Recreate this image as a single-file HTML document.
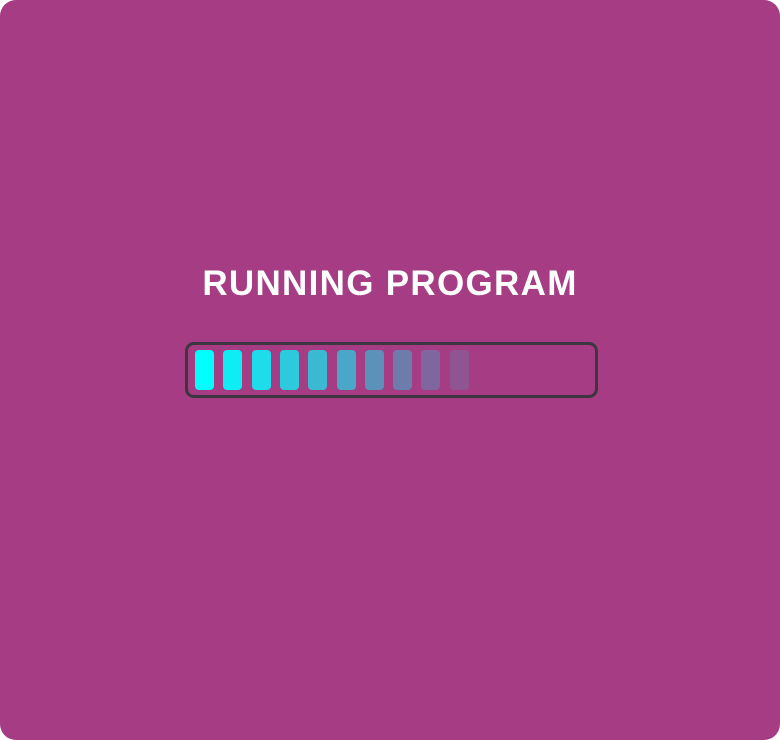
<!DOCTYPE html>
<html><head><style>
html,body{margin:0;padding:0;background:#fff;}
.card{position:absolute;left:0;top:0;width:780px;height:740px;background:#a53c84;border-radius:16px;}
.t{position:absolute;left:0;width:780px;top:262px;text-align:center;color:#fff;font:bold 35px "Liberation Sans",sans-serif;letter-spacing:1.3px;line-height:44px;}
.bar{position:absolute;left:185px;top:342px;width:407px;height:50px;border:3px solid #3d3540;border-radius:9px;}
.s{position:absolute;top:350px;width:19px;height:40px;border-radius:4px;background:#00ffff;}
</style></head><body>
<div class="card">
<div class="t">RUNNING PROGRAM</div>
<div class="bar"></div>
<div class="s" style="left:195px;opacity:1"></div>
<div class="s" style="left:223px;opacity:.91"></div>
<div class="s" style="left:252px;opacity:.82"></div>
<div class="s" style="left:280px;opacity:.73"></div>
<div class="s" style="left:308px;opacity:.64"></div>
<div class="s" style="left:337px;opacity:.55"></div>
<div class="s" style="left:365px;opacity:.44"></div>
<div class="s" style="left:393px;opacity:.33"></div>
<div class="s" style="left:421px;opacity:.22"></div>
<div class="s" style="left:450px;opacity:.13"></div>
</div>
</body></html>
